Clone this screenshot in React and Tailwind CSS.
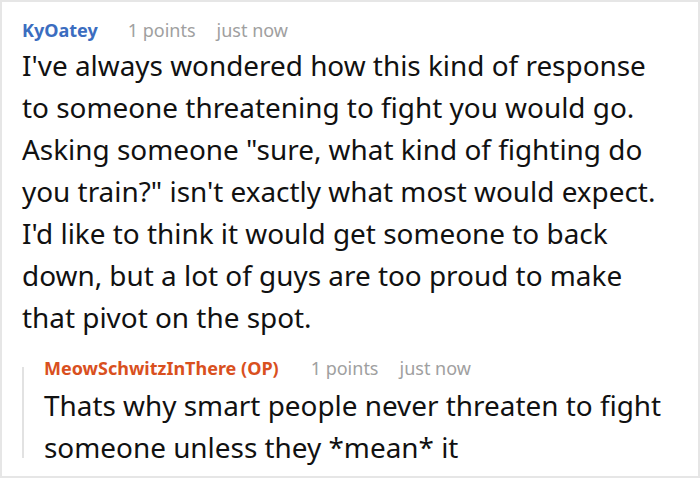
import React from 'react';

const font = { fontFamily: '"Noto Sans", "Open Sans", sans-serif' };

function Meta({ name, nameClass, gap, points, time, className = '' }) {
  return (
    <div className={`flex items-center h-[28px] text-[18px] leading-[28px] ${className}`}>
      <span className={`font-bold ${nameClass}`}>{name}</span>
      <span className={`${gap} text-[#a0a0a0]`}>{points} points</span>
      <span className="ml-[21px] text-[#a0a0a0]">{time}</span>
    </div>
  );
}

export default function App() {
  return (
    <div
      className="w-[700px] h-[478px] bg-white border-2 border-[#e6e6e6] overflow-hidden pl-[20px] pt-[14px]"
      style={font}
    >
      <Meta
        name="KyOatey"
        nameClass="text-[#3b6dc0]"
        gap="ml-[30px]"
        points={1}
        time="just now"
      />
      <p className="w-[650px] text-[27.9px] leading-[42px] text-[#111]">
        I've always wondered how this kind of response to someone threatening
        to fight you would go. Asking someone "sure, what kind of fighting do
        you train?" isn't exactly what most would expect. I'd like to think it
        would get someone to back down, but a lot of guys are too proud to make
        that pivot on the spot.
      </p>
      <div className="flex flex-col mt-[29px] border-l-2 border-[#e2e2e2] pl-[20px]">
        <Meta
          name="MeowSchwitzInThere (OP)"
          nameClass="text-[#d9501e]"
          gap="ml-[32px]"
          points={1}
          time="just now"
          className="-mt-[13px]"
        />
        <p className="w-[630px] text-[27.9px] leading-[42px] text-[#111] mt-[2px] -mb-[10px]">
          Thats why smart people never threaten to fight someone unless they
          *mean* it
        </p>
      </div>
    </div>
  );
}
